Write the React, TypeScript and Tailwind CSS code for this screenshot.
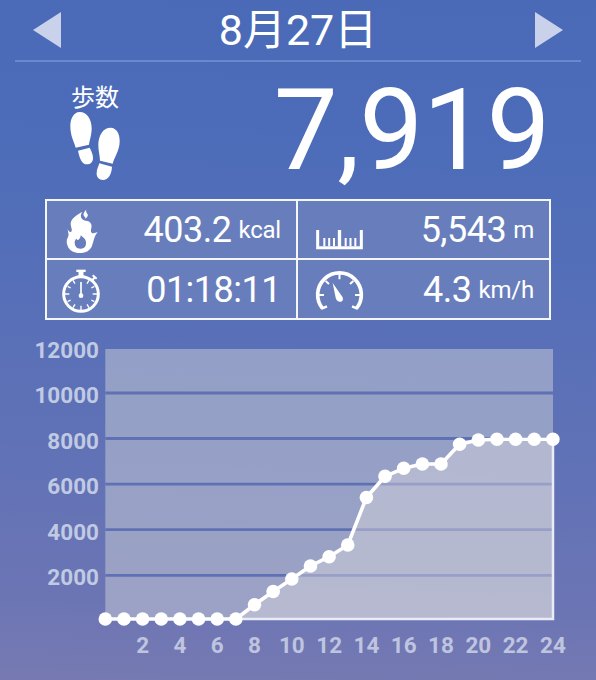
import type { ReactNode } from 'react'

const HOURS = [2, 4, 6, 8, 10, 12, 14, 16, 18, 20, 22, 24]
const STEPS = [12000, 10000, 8000, 6000, 4000, 2000]

// y position of the running total for every hour, inside the 462x286 plot
const TOTALS = [
  278, 278, 278, 278, 278, 278, 278, 278, 263.7, 250.5, 238, 225, 215.7, 204,
  156.5, 135.3, 127.3, 123, 123, 103.3, 99, 98.2, 98.2, 98.2, 98.2,
]
const GRID = [52, 97.5, 143.2, 188.7, 234.3]

const hourX = (hour: number) => 7.3 + hour * 18.65

function FootprintsIcon() {
  return (
    <svg viewBox="90 108 150 210" className="h-[70px] w-[50px]" fill="white">
      <path d="M107 218 C102 200 91 183 91 154 C91 129 102 112 118 111 C140 110 155 133 155 160 C155 181 149 195 147 209 Z" />
      <path d="M114 227 L149 218 C155 229 159 240 159 249 C159 261 151 268 141 268 C124 268 119 249 114 227 Z" />
      <path d="M180 257 C180 242 175 229 175 210 C175 180 190 158 212 158 C230 159 239 176 239 199 C239 227 223 247 218 266 Z" />
      <path d="M178 265 L216 275 C215 297 205 315 189 315 C177 315 169 306 170 294 C170 283 175 275 178 265 Z" />
    </svg>
  )
}

function FlameIcon() {
  return (
    <svg viewBox="36 33 180 168" className="h-14 w-15 shrink-0">
      <path
        d="M142 63 C129 69 107 83 107 98 C107 108 112 114 110 120 C108 126 101 122 98 115 C99 127 103 130 99 138 C93 148 95 157 98 165 C103 179 117 186 134 186 C153 186 166 178 171 164 C177 149 177 136 188 124 C180 126 173 128 170 125 C164 117 173 109 168 98 C162 88 151 92 142 85 C136 79 136 70 142 63 Z"
        fill="white"
      />
      <path d="M154 56 C145 64 143 72 149 77 C152 79 151 82 150 84 C160 77 160 72 156 67 C153 63 153 60 154 56 Z" fill="white" />
      <path d="M137 133 C145 140 154 145 153 157 C153 168 146 174 136 173 C125 173 119 164 119 155 C119 149 121 146 124 143 C127 148 129 148 132 145 C136 141 137 137 137 133 Z" fill="#687ebc" />
    </svg>
  )
}

function StopwatchIcon() {
  return (
    <svg viewBox="36 210 180 168" className="h-14 w-15 shrink-0" fill="none" stroke="white">
      <circle cx="138" cy="306" r="52" strokeWidth="9" />
      <path d="M124 236.500H152" strokeWidth="7" />
      <path d="M138 238V254" strokeWidth="15" />
      <path d="M173 250L185 260M179 256L170 267" strokeWidth="6" />
      <path d="M138 270V310" strokeWidth="5" />
      <circle cx="138" cy="311" r="7" fill="white" stroke="none" />
      <path
        d="M138 341V356M103 306H90M173 306H186M120 275L114 265M156 275L162 265M107 288L98 283M169 288L178 283M107 324L98 329M169 324L178 329M120 337L114 347M156 337L162 347"
        strokeWidth="4"
      />
    </svg>
  )
}

function RulerIcon() {
  return (
    <svg viewBox="24 33 180 168" className="h-14 w-15 shrink-0 overflow-visible" fill="none" stroke="white">
      <path d="M83 117V170H214V117" strokeWidth="9" />
      <path d="M148.500 117V170" strokeWidth="10" />
      <path d="M103 141V166M117.500 141V166M132 141V166M167 141V166M181.500 141V166M196 141V166" strokeWidth="6" />
    </svg>
  )
}

function SpeedIcon() {
  return (
    <svg viewBox="24 211 180 168" className="h-14 w-15 shrink-0 overflow-visible" fill="none" stroke="white">
      <path d="M98 351A65.500 65.500 0 1 1 199 351" strokeWidth="11" />
      <path d="M95 351L111 344M202 351L186 344" strokeWidth="7" />
      <path d="M148.500 247V263M85 310H102M195 310H212M107 268L117 277M190 268L180 277" strokeWidth="6" />
      <path d="M128 274L157 315C162 325 156 331 149 330C142 329 139 325 137 318Z" fill="white" stroke="none" />
    </svg>
  )
}

type StatProps = {
  icon: ReactNode
  value: string
  unit?: string
  className?: string
}

function Stat({ icon, value, unit, className = '' }: StatProps) {
  return (
    <div className={`flex items-center justify-between bg-[#687ebc] pr-[15px] ${className}`}>
      {icon}
      <div className="flex items-center whitespace-nowrap text-[36px] leading-[36px] tracking-[-0.500px]">
        <span>{value}</span>
        {unit && <span className="ml-[7px] text-[24px] leading-[34px] tracking-[-0.200px]">{unit}</span>}
      </div>
    </div>
  )
}

function StepChart() {
  const line = TOTALS.map((y, hour) => `${hourX(hour)},${y}`).join(' ')

  return (
    <svg viewBox="0 0 462 286" className="h-[286px] w-[462px] shrink-0">
      <rect x="7.300" y="8" width="447.700" height="270" fill="#c7cbd4" fillOpacity="0.520" />
      {GRID.map((y) => (
        <path key={y} d={`M7.300 ${y}H455`} stroke="#6070b4" strokeWidth="2.800" />
      ))}
      <polygon points={`${line} ${hourX(24)},278 ${hourX(0)},278`} fill="#d4d4dc" fillOpacity="0.480" />
      <path d="M130 278H455V98" fill="none" stroke="#e9ebf5" strokeWidth="2.500" />
      <polyline points={line} fill="none" stroke="white" strokeWidth="3.600" strokeLinejoin="round" />
      {TOTALS.map((y, hour) => (
        <circle key={hour} cx={hourX(hour)} cy={y} r="6.800" fill="white" />
      ))}
    </svg>
  )
}

export default function App() {
  return (
    <main className="flex h-[680px] w-[596px] flex-col overflow-hidden bg-[linear-gradient(182deg,#4a6ab8_0%,#4c6cb9_20%,#566fb8_44%,#6272b6_70%,#6c75b4_88%,#777ab2_100%)] font-[Roboto,'Noto_Sans_CJK_JP',sans-serif] text-white">
      <header className="mx-[15px] flex h-[62px] shrink-0 items-center justify-between border-b-2 border-[#6a88cd] px-[18px]">
        <svg viewBox="0 0 28 36" className="h-9 w-7" fill="#c9d2ea">
          <path d="M0 18L28 0V36Z" />
        </svg>
        <h1 className="text-[43px] leading-[59px] font-normal whitespace-nowrap">8月27日</h1>
        <svg viewBox="0 0 28 36" className="h-9 w-7" fill="#c9d2ea">
          <path d="M28 18L0 0V36Z" />
        </svg>
      </header>

      <section className="flex h-[137px] shrink-0 justify-between pr-[46px] pl-[70px]">
        <div className="flex flex-col pt-[23px]">
          <span className="pl-px text-[24px] leading-[26px]">歩数</span>
          <FootprintsIcon />
        </div>
        <div className="pt-[11px] text-[114px] leading-[114px] tracking-[-0.500px]">7,919</div>
      </section>

      <section className="mx-[45px] grid h-[121px] shrink-0 grid-cols-[249px_251px] grid-rows-[57px_58px] gap-[2px] bg-[#f4f6fc] p-[2px]">
        <Stat icon={<FlameIcon />} value="403.2" unit="kcal" />
        <Stat icon={<RulerIcon />} value="5,543" unit="m" />
        <Stat icon={<StopwatchIcon />} value="01:18:11" className="pt-px" />
        <Stat icon={<SpeedIcon />} value="4.3" unit="km/h" className="pt-px" />
      </section>

      <section className="mt-[7px] text-[22.500px] font-bold text-[#c1cae3]">
        <div className="flex h-[300px] items-start pt-[14px]">
          <div className="flex w-[98px] shrink-0 flex-col text-right">
            {STEPS.map((step) => (
              <span key={step} className="-mr-px h-[45.450px] leading-[18px]">
                {step}
              </span>
            ))}
          </div>
          <StepChart />
        </div>
        <div className="flex pl-[124px] text-[#bfc4df]">
          {HOURS.map((hour) => (
            <span key={hour} className="w-[37.300px] shrink-0 text-center leading-[36px]">
              {hour}
            </span>
          ))}
        </div>
      </section>
    </main>
  )
}
